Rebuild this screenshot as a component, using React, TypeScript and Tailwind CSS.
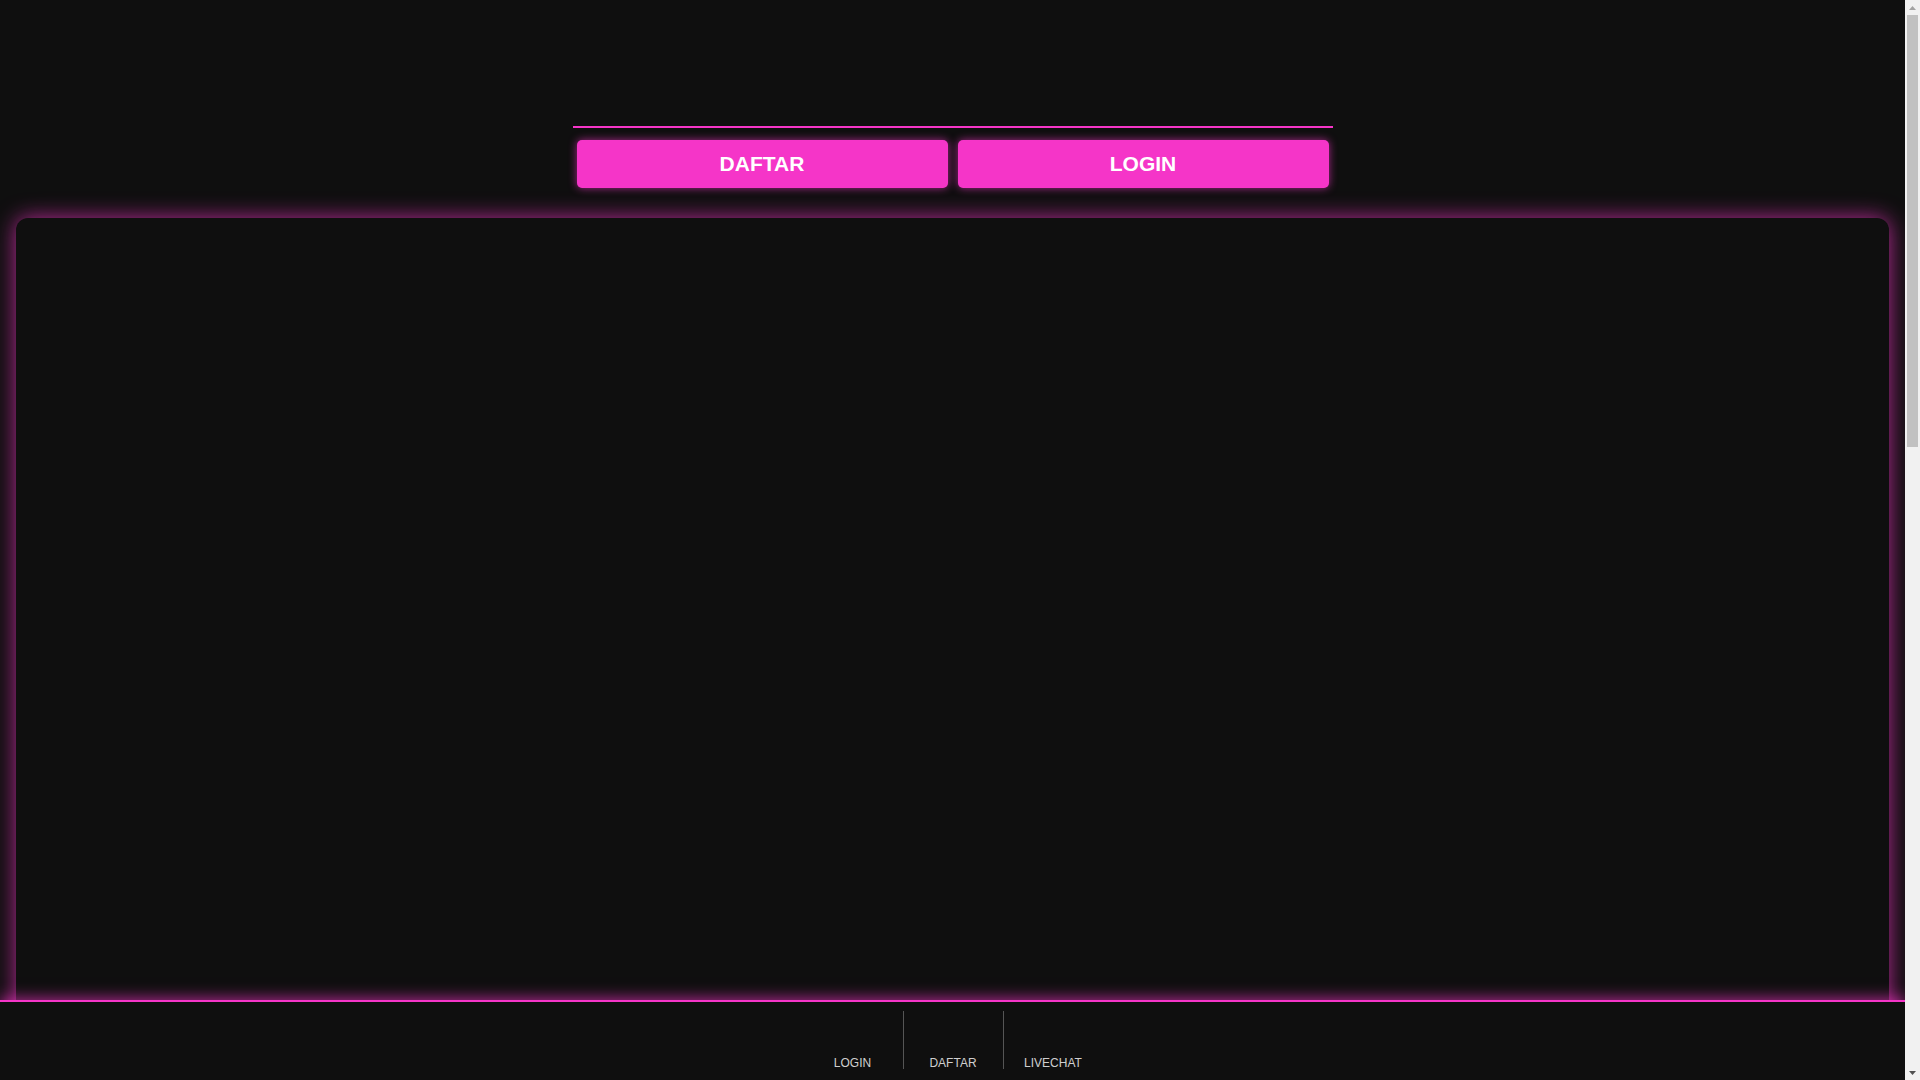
const navItems = ["LOGIN", "DAFTAR", "LIVECHAT"];

function Scrollbar() {
  return (
    <div className="flex h-full w-[15px] shrink-0 flex-col bg-[#f1f1f1]">
      <div className="flex h-[15px] items-center justify-center">
        <svg width="7" height="4" viewBox="0 0 7 4">
          <path d="M3.5 0 L7 4 L0 4 Z" fill="#a3a3a3" />
        </svg>
      </div>
      <div className="mx-[2px] h-[432px] bg-[#c1c1c1]" />
      <div className="flex-1" />
      <div className="flex h-[15px] items-center justify-center">
        <svg width="7" height="4" viewBox="0 0 7 4">
          <path d="M0 0 L7 0 L3.5 4 Z" fill="#505050" />
        </svg>
      </div>
    </div>
  );
}

export default function App() {
  return (
    <div className="flex h-screen overflow-hidden bg-[#0f0f0f] font-['Liberation_Sans',Arial,sans-serif]">
      <div className="relative h-full flex-1 overflow-hidden">
        <header className="h-[126px]" />
        <div className="mx-auto w-[760px] border-t-2 border-[#f535c8] px-1 pt-3 pb-[30px]">
          <div className="grid grid-cols-2 gap-[10px]">
            <a className="flex h-[48px] items-center justify-center rounded-[5px] bg-[#f535c8] text-[21px] font-bold text-white shadow-[0_0_8px_#f535c8aa]">
              DAFTAR
            </a>
            <a className="flex h-[48px] items-center justify-center rounded-[5px] bg-[#f535c8] text-[21px] font-bold text-white shadow-[0_0_8px_#f535c8aa]">
              LOGIN
            </a>
          </div>
        </div>
        <div className="px-4 pb-[120px]">
          <main className="h-[2250px] rounded-[12px] bg-[#0f0f0f] shadow-[0_0_22px_#f535c8bb]" />
        </div>

        <nav className="absolute bottom-0 left-0 right-0 h-[80px] border-t-2 border-[#f535c8] bg-[#0f0f0f] shadow-[0_-2px_14px_#f535c8aa]">
          <div className="flex h-full justify-center pt-[9px]">
            {navItems.map((label, i) => (
              <a
                key={label}
                className={`flex h-[58px] w-[100px] items-end justify-center text-[12px] leading-none text-[#cfcfcf] ${
                  i > 0 ? "border-l border-[#555]" : ""
                }`}
              >
                {label}
              </a>
            ))}
          </div>
        </nav>
      </div>
      <Scrollbar />
    </div>
  );
}
